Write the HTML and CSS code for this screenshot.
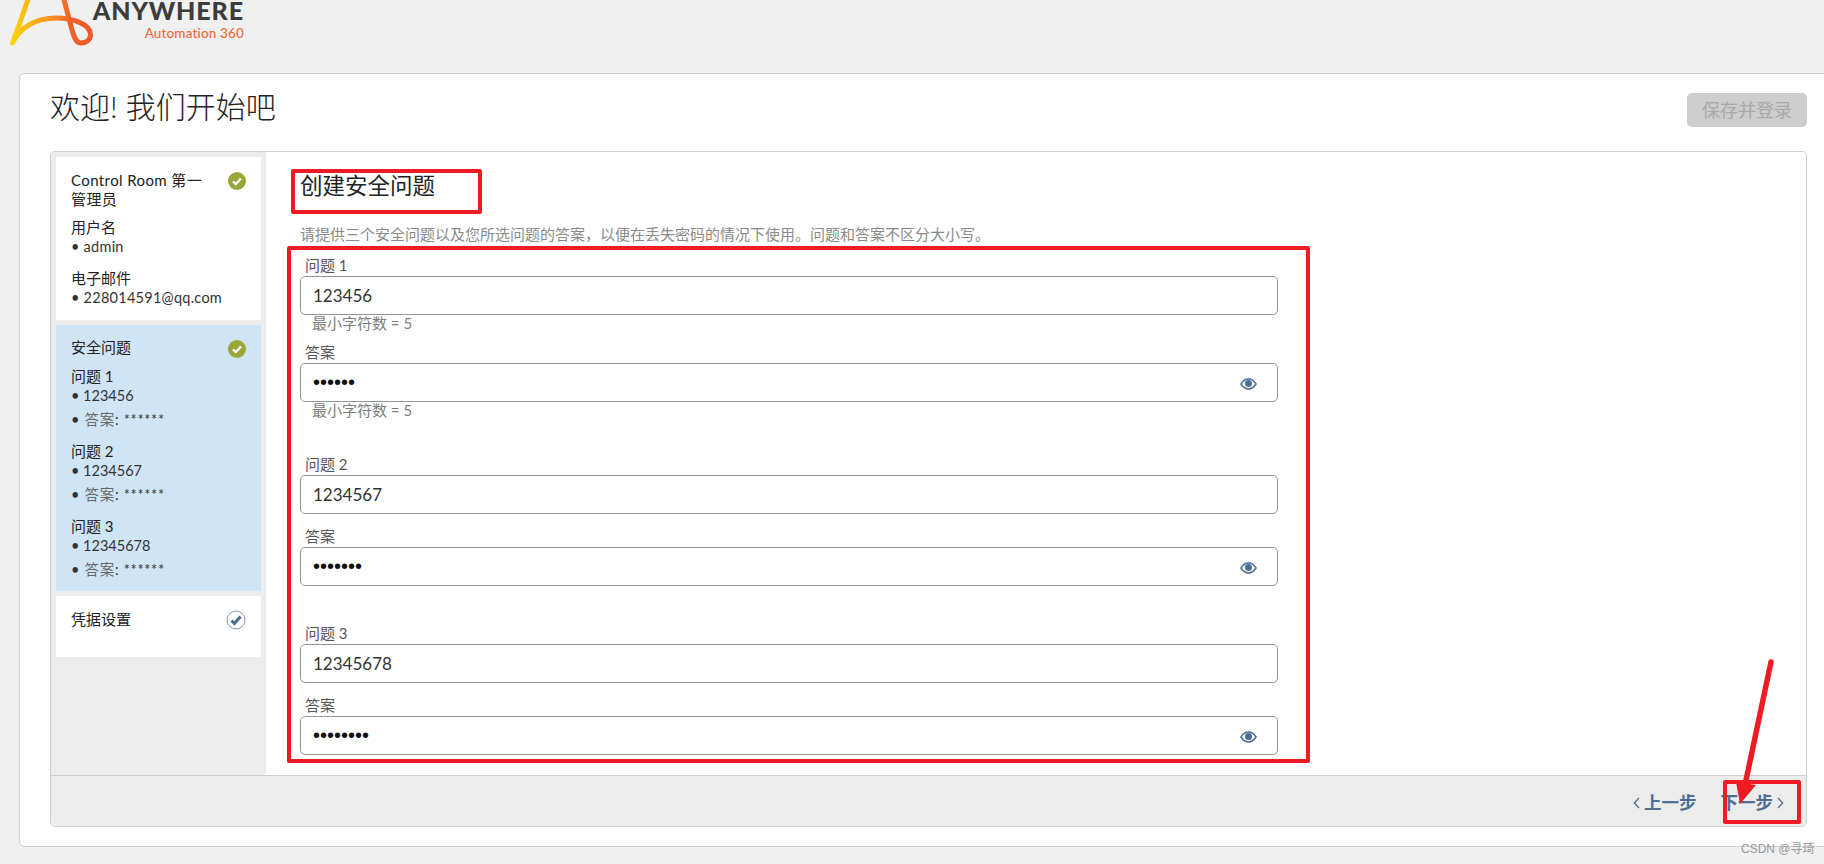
FILE: index.html
```html
<!DOCTYPE html>
<html lang="zh">
<head>
<meta charset="utf-8">
<title>Automation 360</title>
<link rel="stylesheet" href="styles.css">
</head>
<body>
<div class="page">
  <header class="top">
    <svg class="logo-mark" width="96" height="48" viewBox="0 0 96 48" aria-hidden="true">
      <defs>
        <linearGradient id="lg" x1="0" y1="0" x2="1" y2="0">
          <stop offset="0" stop-color="#fdd20f"/>
          <stop offset=".45" stop-color="#f8981d"/>
          <stop offset=".75" stop-color="#f1602a"/>
          <stop offset="1" stop-color="#ee5a2b"/>
        </linearGradient>
      </defs>
      <path d="M29 -4 C24 12 18 28 12.500 43 C20 27 36 18 56 18 C72 18 91 24 90.500 35 C90 41 85 43 81 43 C76 43 74 37 72 30 L63 -4" fill="none" stroke="url(#lg)" stroke-width="5" stroke-linecap="round" stroke-linejoin="round"/>
    </svg>
    <div class="brand">
      <div class="brand-name">ANYWHERE</div>
      <div class="brand-sub">Automation 360</div>
    </div>
  </header>

  <main class="card">
    <div class="card-head">
      <h1 class="welcome">欢迎! 我们开始吧</h1>
      <button class="save" type="button">保存并登录</button>
    </div>

    <section class="panel">
      <div class="panel-body">
        <aside class="side">
          <div class="step step-one">
            <div class="step-head">
              <div class="step-title">Control Room 第一管理员</div>
              <svg class="check" width="18" height="18" viewBox="0 0 18 18" aria-hidden="true"><circle cx="9" cy="9" r="9" fill="#9aa637"/><path d="M5 9.300 L7.800 12 L13 6.500" fill="none" stroke="#fff" stroke-width="2.400"/></svg>
            </div>
            <div class="sub sub-user">用户名</div>
            <div class="val">• admin</div>
            <div class="sub sub-mail">电子邮件</div>
            <div class="val">• 228014591@qq.com</div>
          </div>

          <div class="step step-two">
            <div class="step-head">
              <div class="step-title">安全问题</div>
              <svg class="check" width="18" height="18" viewBox="0 0 18 18" aria-hidden="true"><circle cx="9" cy="9" r="9" fill="#9aa637"/><path d="M5 9.300 L7.800 12 L13 6.500" fill="none" stroke="#fff" stroke-width="2.400"/></svg>
            </div>
            <div class="sub sub-q">问题 1</div>
            <div class="val">• 123456</div>
            <div class="val val-ans">• <span class="ans">答案</span>: ******</div>
            <div class="sub sub-q2">问题 2</div>
            <div class="val">• 1234567</div>
            <div class="val val-ans">• <span class="ans">答案</span>: ******</div>
            <div class="sub sub-q2">问题 3</div>
            <div class="val">• 12345678</div>
            <div class="val val-ans">• <span class="ans">答案</span>: ******</div>
          </div>

          <div class="step step-three">
            <div class="step-head">
              <div class="step-title">凭据设置</div>
              <svg class="check" width="20" height="20" viewBox="0 0 20 20" aria-hidden="true"><circle cx="10" cy="10" r="9" fill="#fff" stroke="#7f95b0" stroke-width="1"/><path d="M5.500 10.500 L8.500 13.500 L14.500 6.500" fill="none" stroke="#4d6d93" stroke-width="3"/></svg>
            </div>
          </div>
        </aside>

        <div class="content">
          <h2 class="form-title">创建安全问题</h2>
          <p class="desc">请提供三个安全问题以及您所选问题的答案，以便在丢失密码的情况下使用。问题和答案不区分大小写。</p>

          <div class="group group-1">
            <label class="lab">问题 1</label>
            <div class="field"><input class="inp" type="text" value="123456"></div>
            <div class="hint">最小字符数 = 5</div>
            <label class="lab lab-a1">答案</label>
            <div class="field"><input class="inp" type="password" value="123456"><svg class="eye" width="17" height="12" viewBox="0 0 17 12" aria-hidden="true"><path d="M1 6 C3.500 2 6 1 8.500 1 C11 1 13.500 2 16 6 C13.500 10 11 11 8.500 11 C6 11 3.500 10 1 6 Z" fill="none" stroke="#4d6d93" stroke-width="1.500"/><circle cx="8.500" cy="5.500" r="3.500" fill="#4d6d93"/></svg></div>
            <div class="hint">最小字符数 = 5</div>
          </div>

          <div class="group group-2">
            <label class="lab">问题 2</label>
            <div class="field"><input class="inp" type="text" value="1234567"></div>
            <label class="lab lab-a2">答案</label>
            <div class="field"><input class="inp" type="password" value="1234567"><svg class="eye" width="17" height="12" viewBox="0 0 17 12" aria-hidden="true"><path d="M1 6 C3.500 2 6 1 8.500 1 C11 1 13.500 2 16 6 C13.500 10 11 11 8.500 11 C6 11 3.500 10 1 6 Z" fill="none" stroke="#4d6d93" stroke-width="1.500"/><circle cx="8.500" cy="5.500" r="3.500" fill="#4d6d93"/></svg></div>
          </div>

          <div class="group group-3">
            <label class="lab">问题 3</label>
            <div class="field"><input class="inp" type="text" value="12345678"></div>
            <label class="lab lab-a2">答案</label>
            <div class="field"><input class="inp" type="password" value="12345678"><svg class="eye" width="17" height="12" viewBox="0 0 17 12" aria-hidden="true"><path d="M1 6 C3.500 2 6 1 8.500 1 C11 1 13.500 2 16 6 C13.500 10 11 11 8.500 11 C6 11 3.500 10 1 6 Z" fill="none" stroke="#4d6d93" stroke-width="1.500"/><circle cx="8.500" cy="5.500" r="3.500" fill="#4d6d93"/></svg></div>
          </div>
        </div>
      </div>

      <footer class="panel-foot">
        <a class="nav nav-prev"><svg class="chev" width="7" height="12" viewBox="0 0 7 12" aria-hidden="true"><path d="M6 1 L1.300 6 L6 11" fill="none" stroke="#4d6d93" stroke-width="1.300"/></svg>上一步</a>
        <a class="nav nav-next">下一步<svg class="chev" width="7" height="12" viewBox="0 0 7 12" aria-hidden="true"><path d="M1 1 L5.700 6 L1 11" fill="none" stroke="#4d6d93" stroke-width="1.300"/></svg></a>
      </footer>
    </section>
  </main>

  <svg class="marks" width="1824" height="864" viewBox="0 0 1824 864" aria-hidden="true">
    <g fill="none" stroke="#ed1c24" stroke-width="4" stroke-linejoin="round">
      <rect x="293" y="171" width="187" height="41"/>
      <rect x="289" y="248" width="1019" height="513"/>
      <rect x="1725" y="782" width="74" height="40"/>
    </g>
    <path d="M1771 662 L1745 785" fill="none" stroke="#ed1c24" stroke-width="5.500" stroke-linecap="round"/>
    <path d="M1736 782 L1756 785 L1740 804 Z" fill="#ed1c24"/>
  </svg>
  <div class="watermark">CSDN @寻琦</div>
</div>
</body>
</html>
```

FILE: styles.css
```css
* { box-sizing: border-box; }
html, body { margin: 0; padding: 0; }
body {
  font-family: Lato, "Noto Sans CJK SC", sans-serif;
  color: #222;
  background: #f0f0f0;
}
.page {
  position: relative;
  width: 1824px;
  height: 864px;
  overflow: hidden;
  display: flex;
  flex-direction: column;
}

/* top brand bar */
.top {
  height: 73px;
  flex: none;
  display: flex;
  align-items: flex-start;
  position: relative;
}
.logo-mark { flex: none; }
.brand {
  margin-left: -4px;
  width: 152px;
  text-align: right;
}
.brand-name {
  font: 900 25px/20px Lato, "Liberation Sans", sans-serif;
  color: #3c3c3c;
  letter-spacing: .9px;
}
.brand-sub {
  font: 500 13.500px/16px Lato, sans-serif;
  color: #ee6a35;
  margin-top: 5px;
  letter-spacing: .15px;
}

/* main card */
.card {
  margin-left: 19px;
  width: 1830px;
  height: 774px;
  flex: none;
  background: #fff;
  border: 1px solid #cfcfcf;
  border-radius: 5px 0 0 5px;
  padding: 0 17px 0 30px;
  display: flex;
  flex-direction: column;
}
.card-head {
  width: 1757px;
  height: 77px;
  flex: none;
  display: flex;
  justify-content: space-between;
  align-items: flex-start;
}
.welcome {
  margin: 11px 0 0;
  font-size: 30px;
  line-height: 42px;
  font-weight: 300;
  color: #222;
}
.save {
  width: 120px;
  height: 34px;
  margin-top: 19px;
  border: 0;
  border-radius: 5px;
  background: #cdcdcd;
  color: #a9a9a9;
  font: 400 18px/34px Lato, "Noto Sans CJK SC", sans-serif;
  padding: 0;
}

/* panel */
.panel {
  width: 1757px;
  height: 676px;
  flex: none;
  border: 1px solid #cfcfcf;
  border-radius: 5px;
  display: flex;
  flex-direction: column;
  overflow: hidden;
}
.panel-body {
  flex: 1;
  min-height: 0;
  display: flex;
}
.panel-foot {
  height: 51px;
  flex: none;
  background: #ececec;
  border-top: 1px solid #cfcfcf;
  display: flex;
  justify-content: flex-end;
  align-items: center;
  gap: 24px;
  padding: 4px 22px 0 0;
}
.nav {
  color: #4d6d93;
  font-size: 17.500px;
  font-weight: 700;
  line-height: 24px;
  display: flex;
  align-items: center;
  gap: 4px;
}
.chev { flex: none; }

/* sidebar */
.side {
  width: 215px;
  flex: none;
  background: #ececec;
  padding: 5px 5px 0;
  display: flex;
  flex-direction: column;
  gap: 5px;
}
.step { background: #fff; padding: 14px 15px 0 15px; font-size: 15px; }
.step-one { height: 163px; }
.step-two { height: 266px; background: #cfe4f5; padding-top: 13px; }
.step-three { height: 61px; padding-top: 14px; }
.step-head { display: flex; justify-content: space-between; align-items: flex-start; }
.step-title { width: 136px; line-height: 19px; color: #222; letter-spacing: .4px; }
.step-two .step-title, .step-three .step-title { letter-spacing: 0; }
.check { flex: none; margin-top: 1px; }
.step-two .check { margin-top: 2px; }
.step-three .check { margin-top: 0; }
.sub { line-height: 19px; color: #222; }
.val { line-height: 19px; color: #333; font-size: 14.500px; }
.step-one .val { letter-spacing: .25px; }
.sub-user { margin-top: 9px; }
.sub-mail { margin-top: 13px; }
.sub-q { margin-top: 9px; }
.sub-q2 { margin-top: 13px; }
.val-ans { margin-top: 5px; letter-spacing: .7px; }
.ans { color: #666; }

/* form */
.content {
  flex: 1;
  min-width: 0;
  padding: 19px 0 0 34px;
}
.form-title {
  margin: 0;
  font-size: 22.500px;
  line-height: 30px;
  font-weight: 400;
  color: #222;
}
.desc {
  margin: 23px 0 0;
  font-size: 15px;
  line-height: 20px;
  color: #8a8a8a;
}
.group { width: 978px; }
.group-1 { margin-top: 12px; }
.group-2 { margin-top: 36px; }
.group-3 { margin-top: 38px; }
.lab {
  display: block;
  padding: 0 0 2px 5px;
  font-size: 15px;
  line-height: 18px;
  color: #555;
}
.lab-a1 { margin-top: 11px; }
.lab-a2 { margin-top: 13px; }
.field { position: relative; height: 39px; }
.inp {
  display: block;
  width: 100%;
  height: 39px;
  border: 1px solid #959595;
  border-radius: 5px;
  padding: 0 12px;
  background: #fff;
  font: 400 17px/37px Lato, "Noto Sans CJK SC", sans-serif;
  color: #333;
  outline: 0;
}
input[type="password"] { font: 400 20px/37px "Liberation Sans", sans-serif; color: #111; }
.eye { position: absolute; right: 21px; top: 15px; }
.hint {
  padding-left: 12px;
  font-size: 15px;
  line-height: 17px;
  color: #7d7d7d;
}

/* annotations laid over the screenshot */
.marks { position: absolute; left: 0; top: 0; pointer-events: none; }
.watermark {
  position: absolute;
  left: 1741px;
  top: 841px;
  font: 400 12px/16px "Liberation Sans", "Noto Sans CJK SC", sans-serif;
  color: #999;
}
```
